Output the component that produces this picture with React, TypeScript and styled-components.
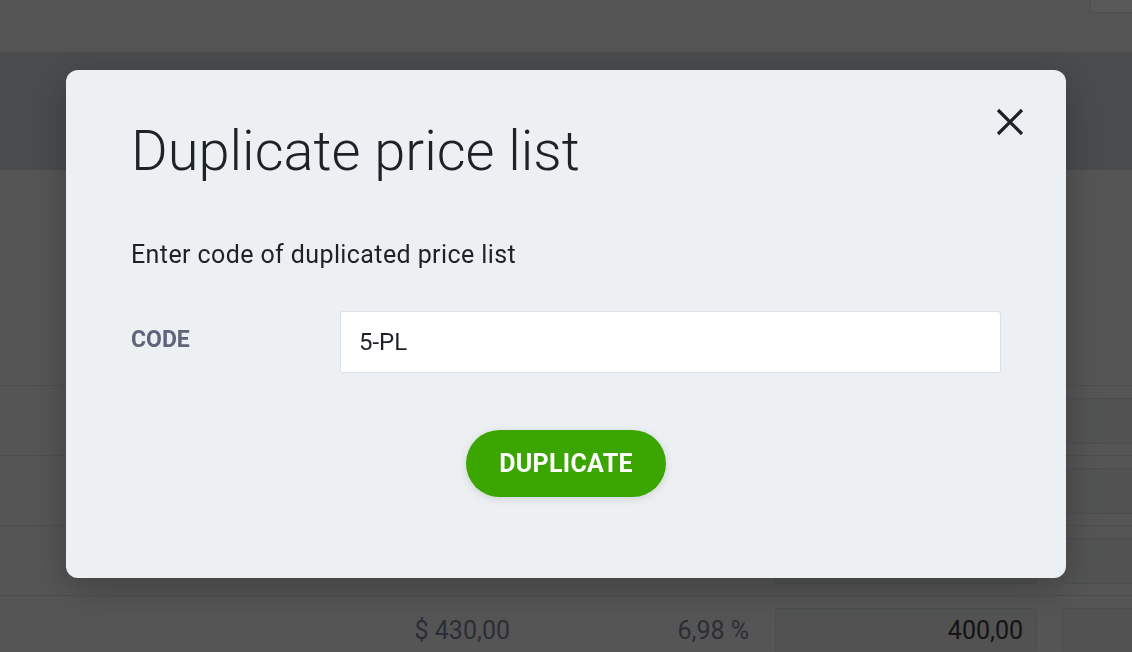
import React from "react";
import styled, { createGlobalStyle } from "styled-components";

const GlobalStyle = createGlobalStyle`
  html, body { margin: 0; padding: 0; }
  body { font-family: Roboto, "Liberation Sans", Arial, sans-serif; background: #f3f3f3; overflow: hidden; }
  * { box-sizing: border-box; }
`;

const Page = styled.div`
  width: 1132px;
  height: 652px;
  background: #f3f3f3;
  overflow: hidden;
`;

const TopBar = styled.header`
  height: 52px;
  background: #efefef;
  display: flex;
  justify-content: flex-end;
  align-items: flex-start;
`;

const TopButton = styled.button`
  width: 42px;
  height: 13px;
  border: 1px solid #e6e6e6;
  border-top: none;
  border-right: none;
  border-radius: 0 0 0 6px;
  background: #ffffff;
  padding: 0;
`;

const TitleBand = styled.div`
  height: 118px;
  background: #d3d6dc;
`;

const Summary = styled.div`
  height: 215px;
`;

const Row = styled.div`
  height: 70px;
  border-top: 1px solid #dedfe1;
  display: flex;
  align-items: center;
  font-size: 25px;
`;

const PriceCell = styled.div`
  flex: 0 0 510px;
  text-align: right;
  color: #7e8397;
`;

const PctCell = styled.div`
  flex: 0 0 239px;
  text-align: right;
  color: #7e8397;
`;

const CellBox = styled.div<{ $gap: number }>`
  flex: 0 0 262px;
  height: 46px;
  margin-left: ${(p) => p.$gap}px;
  background: #ebecee;
  border: 1px solid #dcdde1;
  border-radius: 4px;
  display: flex;
  align-items: center;
  justify-content: flex-end;
  padding-right: 13px;
  color: #3a3a3a;
`;

const Overlay = styled.div`
  position: fixed;
  inset: 0;
  background: rgba(0, 0, 0, 0.65);
  display: flex;
  justify-content: center;
  align-items: flex-start;
  padding-top: 70px;
`;

const Modal = styled.div`
  position: relative;
  width: 1000px;
  background: #ecf0f3;
  border-radius: 12px;
  padding: 48px 65px 81px;
  box-shadow: 0 10px 40px rgba(0, 0, 0, 0.25);
  color: #1e2228;
`;

const CloseButton = styled.button`
  position: absolute;
  top: 38px;
  right: 42px;
  width: 28px;
  height: 28px;
  padding: 0;
  border: none;
  background: transparent;
  display: flex;
  cursor: pointer;
`;

const Title = styled.h1`
  margin: 0;
  font-size: 56px;
  font-weight: 300;
  line-height: 67px;
  color: #1e2228;
`;

const Subtitle = styled.p`
  margin: 55px 0 0;
  font-size: 25px;
  letter-spacing: 0.4px;
  line-height: 29px;
  color: #1e2228;
`;

const FieldRow = styled.div`
  margin-top: 42px;
  display: flex;
  align-items: center;
`;

const Label = styled.label`
  width: 209px;
  font-size: 23px;
  font-weight: 700;
  color: #5e6579;
  margin-bottom: 5px;
`;

const Input = styled.input`
  width: 661px;
  height: 62px;
  border: 1px solid #dcdfe7;
  border-radius: 3px;
  background: #ffffff;
  padding: 0 18px;
  font-family: Roboto, "Liberation Sans", Arial, sans-serif;
  font-size: 24px;
  color: #1e2228;
  outline: none;
`;

const Actions = styled.div`
  margin-top: 57px;
  display: flex;
  justify-content: center;
`;

const PrimaryButton = styled.button`
  width: 200px;
  height: 67px;
  border: none;
  border-radius: 34px;
  background: #3ba502;
  color: #ffffff;
  font-family: Roboto, "Liberation Sans", Arial, sans-serif;
  font-size: 25px;
  letter-spacing: 0.3px;
  font-weight: 700;
  box-shadow: 0 2px 8px rgba(0, 0, 0, 0.12);
  cursor: pointer;
`;

const rows = [
  { price: "$ 510,00", pct: "5,12 %", value: "480,00" },
  { price: "$ 320,00", pct: "4,40 %", value: "300,00" },
  { price: "$ 275,00", pct: "3,90 %", value: "260,00" },
  { price: "$ 430,00", pct: "6,98 %", value: "400,00" },
];

export default function App() {
  return (
    <>
      <GlobalStyle />
      <Page>
        <TopBar>
          <TopButton aria-label="menu" />
        </TopBar>
        <TitleBand />
        <Summary />
        {rows.map((r, i) => (
          <Row key={i}>
            <PriceCell>{r.price}</PriceCell>
            <PctCell>{r.pct}</PctCell>
            <CellBox $gap={26}>{r.value}</CellBox>
            <CellBox $gap={25} />
          </Row>
        ))}
      </Page>
      <Overlay>
        <Modal role="dialog">
          <CloseButton aria-label="Close">
            <svg width="28" height="28" viewBox="0 0 28 28">
              <path d="M2 2 L26 26 M26 2 L2 26" stroke="#1e2228" strokeWidth="3.2" strokeLinecap="butt" fill="none" />
            </svg>
          </CloseButton>
          <Title>Duplicate price list</Title>
          <Subtitle>Enter code of duplicated price list</Subtitle>
          <FieldRow>
            <Label htmlFor="code">CODE</Label>
            <Input id="code" defaultValue="5-PL" />
          </FieldRow>
          <Actions>
            <PrimaryButton>DUPLICATE</PrimaryButton>
          </Actions>
        </Modal>
      </Overlay>
    </>
  );
}
